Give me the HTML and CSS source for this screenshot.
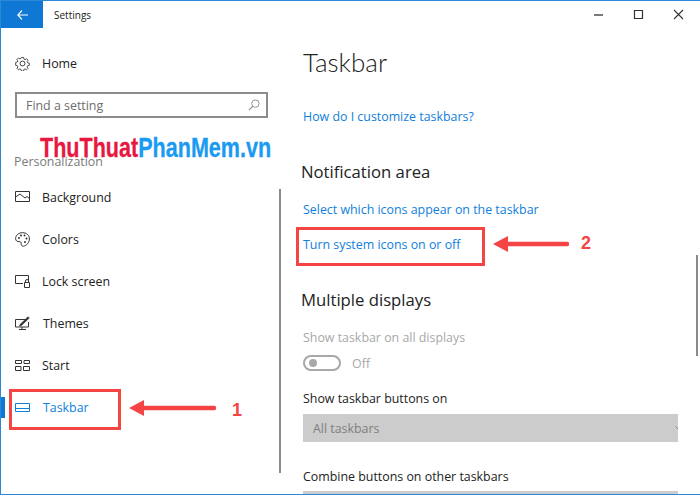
FILE: index.html
```html
<!DOCTYPE html>
<html lang="en">
<head>
<meta charset="utf-8">
<title>Settings</title>
<link rel="stylesheet" href="styles.css">
</head>
<body>
<div class="window">
  <aside class="sidebar">
    <div class="titlebar">
      <div class="back">
        <svg width="11" height="10" viewBox="0 0 11 10"><path d="M5 .5.8 5 5 9.500M.8 5H11" fill="none" stroke="#fff" stroke-width="1.100"/></svg>
      </div>
      <span class="title">Settings</span>
    </div>
    <div class="home">
      <svg class="icon" width="15" height="15" viewBox="0 0 16 16"><g fill="none" stroke="#333" stroke-width="1"><circle cx="8" cy="8" r="2.600"/><path d="M6.700.8h2.600l.4 2 1.400.6 1.700-1.100 1.800 1.800-1.100 1.700.6 1.400 2 .4v2.600l-2 .4-.6 1.400 1.100 1.700-1.800 1.800-1.700-1.100-1.400.6-.4 2H6.700l-.4-2-1.400-.6-1.700 1.100-1.800-1.800 1.100-1.700-.6-1.400-2-.4V6.700l2-.4.6-1.400L1.400 3.200l1.800-1.800 1.700 1.100 1.400-.6z" transform="translate(.8 .8) scale(.9)"/></g></svg>
      <span>Home</span>
    </div>
    <div class="search">
      <span>Find a setting</span>
      <svg width="12" height="12" viewBox="0 0 13 13"><circle cx="8" cy="5" r="4" fill="none" stroke="#8a8a8a"/><path d="M5.200 7.800 1 12" stroke="#8a8a8a" stroke-width="1.200"/></svg>
    </div>
    <div class="group">Personalization</div>
    <nav class="nav">
      <div class="item">
        <svg class="icon" width="15" height="12" viewBox="0 0 15 12"><g fill="none" stroke="#333"><path d="M.5.5h14v10H.5z"/><path d="M.5 6 5 3l5 4 2-1.500 2.500 2"/></g></svg>
        <span>Background</span>
      </div>
      <div class="item">
        <svg class="icon" width="15" height="15" viewBox="0 0 15 15"><path d="M7.500.7C3.500.7.600 3.400.600 6.600c0 2.400 2 3.100 3.500 3 1.500 0 2.300.6 2.100 2-.2 1.500.6 2.800 2.100 2.600 3.200-.5 6.100-3.600 6.100-7.200C14.500 3.300 11.500.7 7.500.7z" fill="none" stroke="#333"/><g fill="#333"><circle cx="4" cy="6" r="1"/><circle cx="6" cy="3.500" r="1"/><circle cx="9.500" cy="3.500" r="1"/><circle cx="11.500" cy="6.500" r="1"/><circle cx="10" cy="10" r="1"/></g></svg>
        <span>Colors</span>
      </div>
      <div class="item">
        <svg class="icon" width="15" height="13" viewBox="0 0 15 13"><g fill="none" stroke="#333"><path d="M8 8.500H.5V.5h13v5"/><path d="M9.500 7.500h5v5h-5zM10.500 7.500V6a1.500 1.500 0 0 1 3 0v1.500"/></g></svg>
        <span>Lock screen</span>
      </div>
      <div class="item nudge">
        <svg class="icon" width="15" height="14" viewBox="0 0 15 14"><g fill="none" stroke="#333"><path d="M12 3.500H.5v7.500h13V6M4 13.500h7"/><path d="M7 11v2.500"/><path d="M5 8.500 13 .8l1.300 1.200L6.500 9.500 4.500 10z" fill="#333" stroke-width=".6"/></g></svg>
        <span>Themes</span>
      </div>
      <div class="item">
        <svg class="icon" width="15" height="11" viewBox="0 0 15 11"><g fill="none" stroke="#333"><path d="M.5.500h6v3h-6zM9 .500h5.500v3H9zM.5 6.500h5.500v4H.5zM8.500 6.500h6v4h-6z"/></g></svg>
        <span>Start</span>
      </div>
      <div class="item active nudge">
        <svg class="icon" width="15" height="9" viewBox="0 0 15 9"><g fill="none" stroke="#1080dc"><path d="M.5.500h14v8H.5zM.5 5.500h14"/></g></svg>
        <span>Taskbar</span>
      </div>
    </nav>
  </aside>
  <main class="content">
    <div class="controls">
      <svg width="13" height="13" viewBox="0 0 13 13"><path d="M2 7h9" stroke="#222" stroke-width="1.200"/></svg>
      <svg width="13" height="13" viewBox="0 0 13 13"><path d="M2.500 2.500h8v8h-8z" fill="none" stroke="#333" stroke-width="1.200"/></svg>
      <svg width="13" height="13" viewBox="0 0 13 13"><path d="M2 2l9 9M11 2l-9 9" stroke="#333" stroke-width="1.100"/></svg>
    </div>
    <h1>Taskbar</h1>
    <a class="link first">How do I customize taskbars?</a>
    <h2 class="h-notif">Notification area</h2>
    <a class="link select">Select which icons appear on the taskbar</a>
    <a class="link turn">Turn system icons on or off</a>
    <h2 class="h-multi">Multiple displays</h2>
    <div class="label muted">Show taskbar on all displays</div>
    <div class="toggle-row">
      <span class="toggle"><span class="knob"></span></span>
      <span class="muted">Off</span>
    </div>
    <div class="label buttons-on">Show taskbar buttons on</div>
    <div class="select-box"><span>All taskbars</span><svg width="7" height="4" viewBox="0 0 7 4"><path d="M.5.500 3.500 3.500 6.500.500" fill="none" stroke="#8a8a8a"/></svg></div>
    <div class="label combine">Combine buttons on other taskbars</div>
    <div class="select-box partial"></div>
  </main>
  <div class="scroll scroll-left"></div>
  <div class="scroll scroll-right"></div>
  <div class="watermark"><span class="wm-red">ThuThuat</span><span class="wm-blue">PhanMem.vn</span></div>
  <div class="marker marker-1"></div>
  <div class="marker marker-2"></div>
  <div class="rail"></div>
  <svg class="arrow arrow-1" width="87" height="16" viewBox="0 0 87 16"><path d="M0 8 15 0v5.800h70a2.200 2.200 0 0 1 0 4.400H15V16z" fill="#f44444"/></svg>
  <span class="num num-1">1</span>
  <svg class="arrow arrow-2" width="76" height="16" viewBox="0 0 76 16"><path d="M0 8 15 0v5.800h59a2.200 2.200 0 0 1 0 4.400H15V16z" fill="#f44444"/></svg>
  <span class="num num-2">2</span>
</div>
</body>
</html>
```

FILE: styles.css
```css
* { box-sizing: border-box; }
html, body { margin: 0; padding: 0; background: #fff; }
.window {
  position: relative;
  width: 700px;
  height: 495px;
  overflow: hidden;
  display: flex;
  background: #fff;
  border-top: 1px solid #2b8ad8;
  border-left: 1px solid #2b8ad8;
  border-bottom: 1px solid #2b8ad8;
  font-family: "Open Sans", "Noto Sans", sans-serif;
  font-size: 12.400px;
  color: #222;
}
.sidebar { width: 289px; flex: none; }
.titlebar { height: 27px; display: flex; align-items: center; }
.back { width: 42px; height: 27px; background: #0f78d4; display: flex; align-items: center; justify-content: center; }
.title { margin-left: 11px; font-size: 10px; color: #222; }
.home, .item { display: flex; align-items: center; padding-left: 14px; height: 42px; }
.home { margin-top: 14px; }
.icon { flex: none; margin-right: 12px; }
.nudge .icon { margin-right: 13px; }
.search {
  margin: 8px 0 0 14px;
  width: 253px;
  height: 26px;
  border: 2px solid #8c8c8c;
  display: flex;
  align-items: center;
  justify-content: space-between;
  padding: 0 6px 0 9px;
  color: #6d6d6d;
}
.group { margin-top: 35px; padding-left: 13px; height: 18px; line-height: 18px; color: #7a7a7a; }
.nav { margin-top: 5px; }
.active { color: #1080dc; }
.content { flex: 1; padding-left: 13px; min-width: 0; }
.controls { height: 27px; display: flex; justify-content: flex-end; align-items: center; gap: 27px; padding-right: 15px; }
h1 { margin: 14px 0 0; font-family: Lato, "Open Sans", sans-serif; font-size: 26px; line-height: 40px; font-weight: 300; color: #222; }
h2 { margin: 0 0 0 -2px; font-size: 16.700px; line-height: 24px; font-weight: 400; color: #222; }
.link { display: block; color: #1080dc; line-height: 18px; }
.first { margin-top: 26px; }
.h-notif { margin-top: 34px; }
.select { margin-top: 17px; }
.turn { margin-top: 17px; }
.h-multi { margin-top: 34px; }
.label { line-height: 18px; }
.muted { color: #a8a8a8; }
.h-multi + .label { margin-top: 17px; }
.toggle-row { display: flex; align-items: center; gap: 11px; margin-top: 7px; height: 18px; }
.toggle { width: 38px; height: 16px; border: 2px solid #a8a8a8; border-radius: 8px; display: flex; align-items: center; padding-left: 4px; }
.knob { width: 8px; height: 8px; border-radius: 50%; background: #a8a8a8; }
.buttons-on { margin-top: 18px; }
.select-box {
  margin-top: 6px;
  width: 375px;
  height: 28px;
  background: #cccccc;
  overflow: hidden;
  display: flex;
  align-items: center;
  justify-content: space-between;
  padding: 0 0 0 10px;
  color: #7f7f7f;
}
.select-box svg { flex: none; margin-right: -4px; }
.combine { margin-top: 26px; }
.select-box.partial { margin-top: 5px; }
.scroll { position: absolute; background: #8a8a8a; width: 2px; }
.scroll-left { left: 278px; top: 188px; height: 284px; }
.scroll-right { left: 695px; top: 254px; height: 101px; }
.watermark {
  position: absolute;
  left: 39px;
  top: 132px;
  font-family: "Liberation Sans", sans-serif;
  font-weight: 700;
  font-size: 28px;
  line-height: 30px;
  white-space: nowrap;
  transform: scaleX(.77);
  transform-origin: left center;
  -webkit-text-stroke: .3px currentColor;
}
.wm-red { color: #e8173f; }
.wm-blue { color: #1a9af0; }
.marker { position: absolute; border: 3px solid #f44444; }
.marker-1 { left: 8px; top: 388px; width: 112px; height: 41px; }
.marker-2 { left: 295px; top: 226px; width: 189px; height: 39px; }
.rail { position: absolute; left: -1px; top: 396px; width: 5px; height: 21px; background: #0f78d4; }
.arrow { position: absolute; }
.arrow-1 { left: 128px; top: 399px; }
.arrow-2 { left: 492px; top: 235px; }
.num { position: absolute; font-family: "Liberation Sans", sans-serif; font-weight: 700; font-size: 18px; line-height: 20px; color: #f44444; }
.num-1 { left: 231px; top: 399px; }
.num-2 { left: 580px; top: 232px; }
```
